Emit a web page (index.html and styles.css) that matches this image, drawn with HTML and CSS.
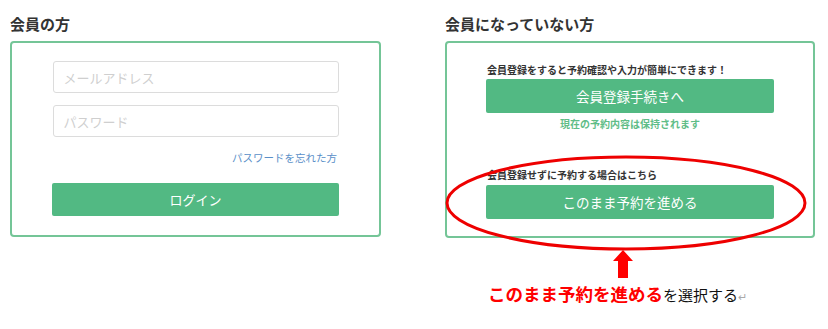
FILE: index.html
```html
<!DOCTYPE html>
<html lang="ja">
<head>
    <meta charset="UTF-8">
    <title>ご予約 - ログイン</title>
    <link rel="stylesheet" href="styles.css">
</head>
<body>
    <div class="panels">
        <div class="panel panel-member">
            <h2>会員の方</h2>
            <div class="box login-box">
                <input type="text" class="field" placeholder="メールアドレス">
                <input type="password" class="field" placeholder="パスワード">
                <a href="#" class="forgot">パスワードを忘れた方</a>
                <button class="btn">ログイン</button>
            </div>
        </div>
        <div class="panel panel-guest">
            <h2>会員になっていない方</h2>
            <div class="box guest-box">
                <p class="note">会員登録をすると予約確認や入力が簡単にできます！</p>
                <button class="btn btn-tall">会員登録手続きへ</button>
                <p class="keep">現在の予約内容は保持されます</p>
                <p class="note note-gap">会員登録せずに予約する場合はこちら</p>
                <button class="btn btn-tall">このまま予約を進める</button>
                <svg class="circle" width="366" height="100" viewBox="0 0 366 100">
                    <ellipse cx="182" cy="50" rx="179" ry="46" fill="none" stroke="#ee0000" stroke-width="3"/>
                </svg>
            </div>
            <div class="annotation">
                <svg class="arrow" width="20" height="28" viewBox="0 0 20 28">
                    <polygon points="10,0 20,11 15,11 15,28 5,28 5,11 0,11" fill="#ff0000"/>
                </svg>
                <p class="caption"><span class="hl">このまま予約を進める</span>を選択する<span class="ret">↵</span></p>
            </div>
        </div>
    </div>
</body>
</html>
```

FILE: styles.css
```css
body {
    margin: 0;
    padding: 14px 10px 0;
    font-family: "Noto Sans CJK JP", "Noto Sans", sans-serif;
    color: #333;
    background-color: #fff;
}
.panels {
    display: flex;
    gap: 64px;
}
.panel {
    width: 371px;
}
.panel-guest {
    width: 370px;
}
h2 {
    margin: 0 0 7px;
    font-size: 15px;
    line-height: 20px;
    font-weight: bold;
    color: #333;
}
.box {
    position: relative;
    border: 2px solid #74c597;
    border-radius: 4px;
    display: flex;
    flex-direction: column;
    align-items: center;
}
.login-box {
    padding: 18px 0 19px;
}
.field {
    width: 286px;
    height: 32px;
    box-sizing: border-box;
    border: 1px solid #dcdcdc;
    border-radius: 3px;
    padding: 0 10px;
    margin: 0 0 12px;
    font-family: inherit;
    font-size: 13px;
    color: #333;
}
.field::placeholder {
    color: #cfcfcf;
}
.forgot {
    align-self: flex-end;
    margin: 1px 42px 0 0;
    font-size: 10.5px;
    line-height: 16px;
    color: #5a8fc8;
    text-decoration: none;
}
.btn {
    width: 287px;
    height: 33px;
    margin-top: 17px;
    border: none;
    border-radius: 2px;
    background-color: #52b983;
    color: #fff;
    font-family: inherit;
    font-size: 13px;
}
.guest-box {
    padding: 20px 0 17px;
}
.note {
    width: 286px;
    margin: 0;
    font-size: 10px;
    line-height: 14px;
    font-weight: bold;
    color: #333;
}
.note-gap {
    margin-top: 37px;
}
.btn-tall {
    width: 288px;
    height: 34px;
    margin-top: 2px;
    font-size: 13.5px;
}
.note-gap + .btn-tall {
    margin-top: 3px;
}
.keep {
    margin: 4px 0 0;
    font-size: 10px;
    line-height: 14px;
    font-weight: bold;
    color: #5fbd87;
}
.circle {
    position: absolute;
    left: -3px;
    top: 110px;
}
.annotation {
    padding: 12px 0 0 43px;
}
.arrow {
    display: block;
    margin-left: 125px;
}
.caption {
    margin: 6px 0 0;
    font-size: 15px;
    line-height: 20px;
    color: #111;
}
.hl {
    color: #ff0000;
    font-weight: bold;
    font-size: 17.5px;
}
.ret {
    color: #aaa;
    font-size: 11px;
}
```
